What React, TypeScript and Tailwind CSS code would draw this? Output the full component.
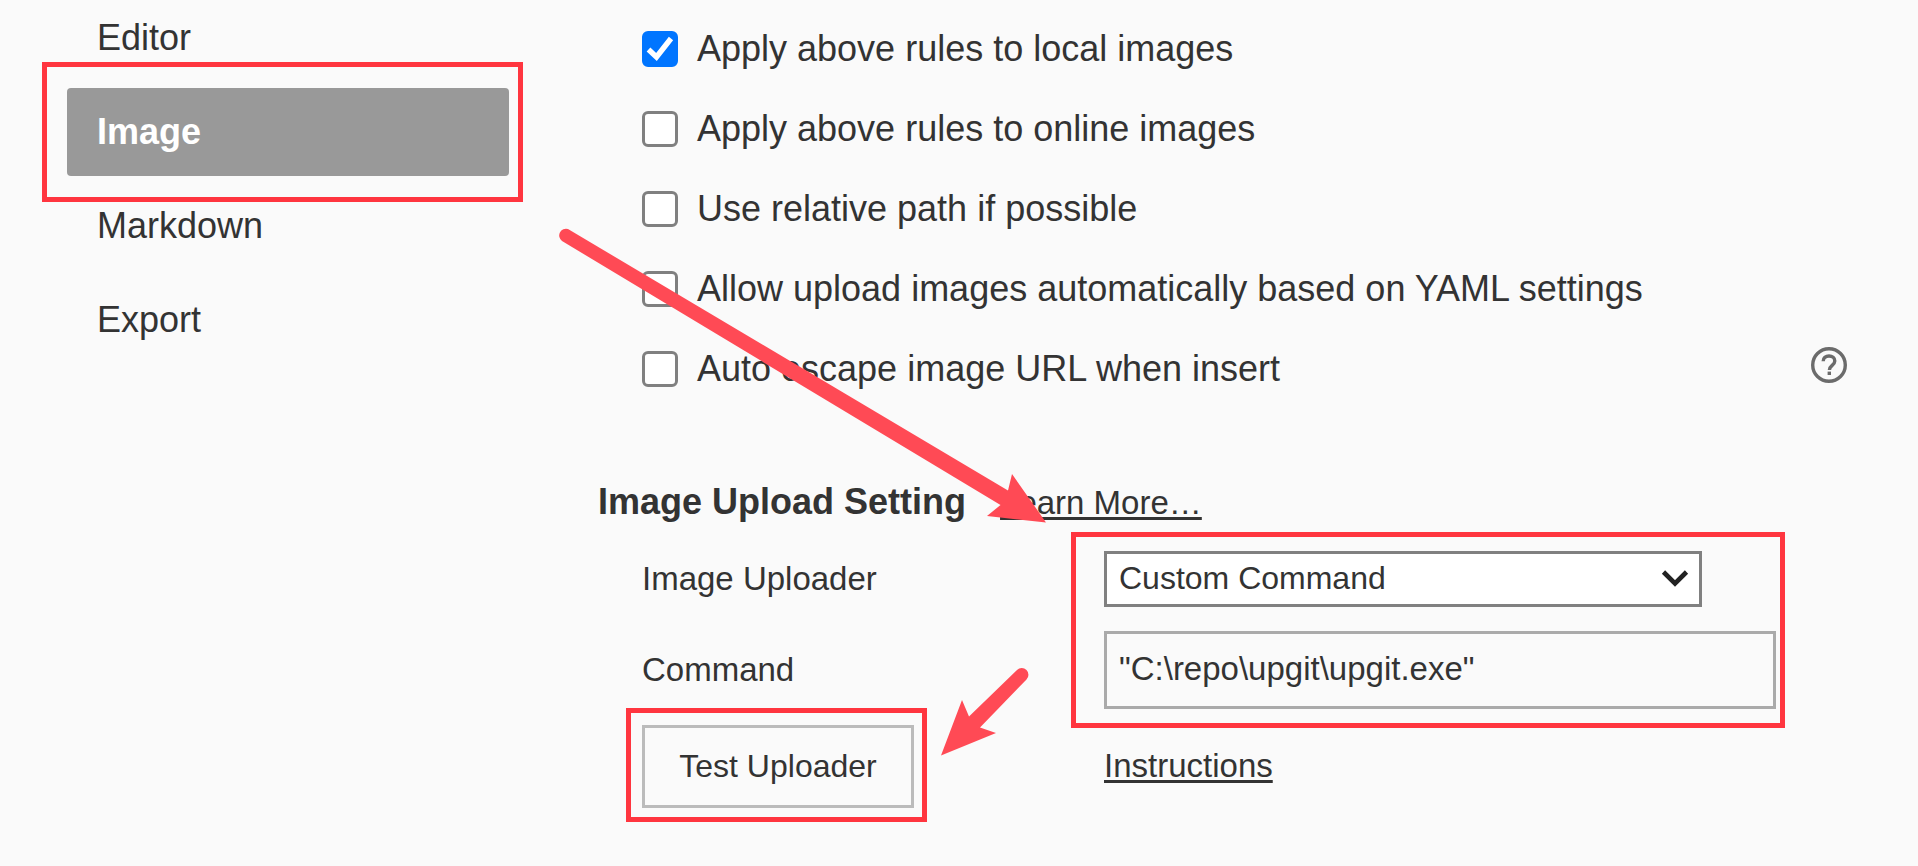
import { useState } from "react";

const sections = ["Editor", "Image", "Markdown", "Export"];

const rules = [
  { id: "local", label: "Apply above rules to local images", checked: true },
  { id: "online", label: "Apply above rules to online images", checked: false },
  { id: "relative", label: "Use relative path if possible", checked: false },
  { id: "yaml", label: "Allow upload images automatically based on YAML settings", checked: false },
  { id: "escape", label: "Auto escape image URL when insert", checked: false, help: true },
];

function Highlight({ className }: { className: string }) {
  return <div className={`pointer-events-none absolute border-5 border-[#ff353f] ${className}`} />;
}

function HelpIcon() {
  return (
    <svg viewBox="0 0 36 36" className="size-9" fill="none" stroke="#6b6b6b" strokeWidth="3.4">
      <circle cx="18" cy="18" r="16.3" />
      <path d="M12.2 14.2c0-3.2 2.5-5.2 5.8-5.2s5.8 2.1 5.8 5c0 4.3-5.4 4.5-5.4 9" />
      <path d="M18.3 24.6v3.4" />
    </svg>
  );
}

function Rule({ id, label, checked, help }: { id: string; label: string; checked: boolean; help?: boolean }) {
  const [on, setOn] = useState(checked);
  return (
    <div className="flex h-20 items-center">
      <span className="relative mr-[19px] size-9 shrink-0">
        <input
          id={id}
          type="checkbox"
          checked={on}
          onChange={(e) => setOn(e.target.checked)}
          className="block size-9 appearance-none rounded-md border-3 border-[#808080] bg-white checked:border-[#0075ff] checked:bg-[#0075ff]"
        />
        {on && (
          <svg viewBox="0 0 36 36" className="pointer-events-none absolute inset-0 size-9" fill="none" stroke="#fff" strokeWidth="5.4">
            <path d="M6.5 18.5 14.5 26 29 7.5" />
          </svg>
        )}
      </span>
      <label htmlFor={id} className="text-[36px] leading-10">
        {label}
      </label>
      {help && (
        <button type="button" aria-label="Help" className="mr-[71px] mb-2 ml-auto">
          <HelpIcon />
        </button>
      )}
    </div>
  );
}

export default function App() {
  const [command, setCommand] = useState('"C:\\repo\\upgit\\upgit.exe"');
  return (
    <div className="relative flex min-h-screen overflow-hidden bg-[#fafafa] font-['Liberation_Sans',Arial,sans-serif] text-[#333]">
      <nav className="-mt-1.5 ml-[67px] flex w-[442px] shrink-0 flex-col gap-1.5">
        {sections.map((s) => (
          <div key={s} className="relative">
            <a
              href={`#${s.toLowerCase()}`}
              className={
                s === "Image"
                  ? "flex h-[88px] items-center rounded-sm bg-[#999] pl-[30px] text-[36px] font-bold text-white"
                  : "flex h-[88px] items-center pl-[30px] text-[36px]"
              }
            >
              {s}
            </a>
            {s === "Image" && <Highlight className="-top-[26px] -right-[14px] -bottom-[26px] -left-[25px]" />}
          </div>
        ))}
      </nav>

      <main className="ml-[89px] flex-1 pt-[9px]">
        <section className="pl-11">
          {rules.map((r) => (
            <Rule key={r.id} {...r} />
          ))}
        </section>

        <section className="mt-[69px]">
          <div className="flex items-baseline gap-[34px]">
            <h2 className="text-[36px] leading-12 font-bold">Image Upload Setting</h2>
            <a href="#learn-more" className="text-[33px] leading-12 underline decoration-3 underline-offset-3">
              Learn More…
            </a>
          </div>

          <div className="mt-6 grid grid-cols-[462px_1fr] items-center pl-11 text-[33px]">
            <label htmlFor="uploader">Image Uploader</label>
            <div className="relative w-[598px]">
              <select
                id="uploader"
                className="block h-14 w-full appearance-none border-3 border-[#808080] bg-white pb-0.5 pl-3 text-[32px] leading-10"
              >
                <option>Custom Command</option>
              </select>
              <svg viewBox="0 0 28 20" className="pointer-events-none absolute top-[17px] right-[13px] h-5 w-7" fill="none" stroke="#222" strokeWidth="4.6">
                <path d="M2.5 4 14 15.5 25.5 4" />
              </svg>
              <Highlight className="-top-[19px] -left-[33px] h-[196px] w-[714px]" />
            </div>

            <label htmlFor="command" className="mt-6">
              Command
            </label>
            <input
              id="command"
              value={command}
              onChange={(e) => setCommand(e.target.value)}
              className="mt-6 h-[78px] w-[672px] border-3 border-[#aaa] bg-transparent pb-0.5 pl-3 text-[33px]"
            />

            <div className="relative mt-4 w-[272px]">
              <button type="button" className="block h-[83px] w-full border-3 border-[#bbb] pb-0.5 text-[32px]">
                Test Uploader
              </button>
              <Highlight className="-top-[17px] -right-[13px] -bottom-[14px] -left-4" />
            </div>
            <a href="#instructions" className="mt-4 justify-self-start pb-0.5 underline decoration-3 underline-offset-3">
              Instructions
            </a>
          </div>
        </section>
      </main>

      <svg viewBox="0 0 1918 866" className="pointer-events-none absolute top-0 left-0 h-[866px] w-[1918px]" fill="#ff4a55">
        <path d="M568 229 1008 490.5 1012 474 1046 522.5 987 516 1000.5 505 562 241A6.8 6.8 0 0 1 568 229Z" />
        <path d="M1017 670 969 716.5 962 700 941 755.5 996 733 980 727.5 1026.5 679.5A6.7 6.7 0 0 0 1017 670Z" />
      </svg>
    </div>
  );
}
